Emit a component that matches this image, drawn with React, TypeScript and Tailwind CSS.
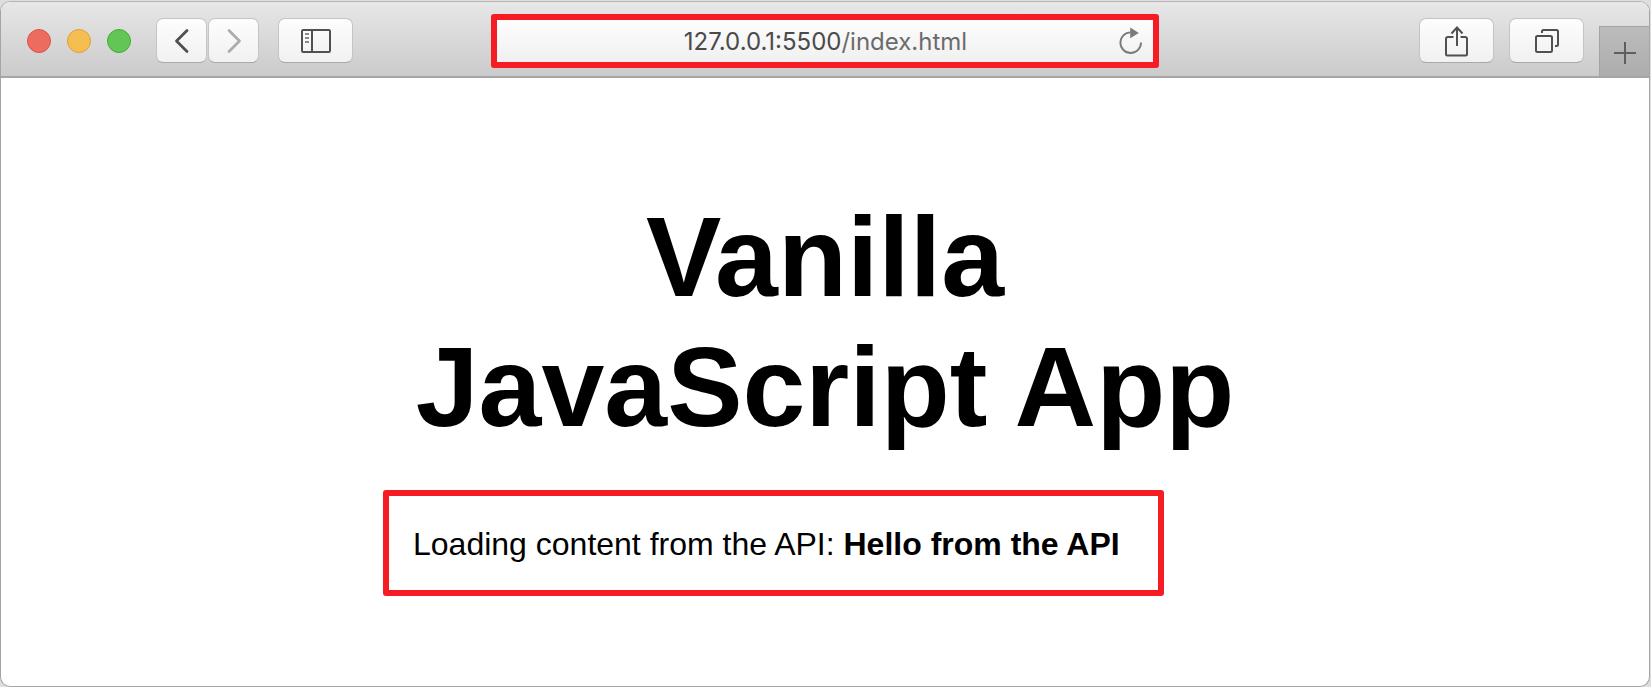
import type { ReactNode } from "react";

function ToolbarButton({ label, className, children }: { label: string; className: string; children: ReactNode }) {
  return (
    <button
      type="button"
      aria-label={label}
      className={`flex h-[45px] shrink-0 items-center justify-center rounded-[7px] border border-[#c4c4c4] border-b-[#a9a9a9] bg-linear-to-b from-[#fdfdfd] to-[#f1f1f1] text-[#505050] ${className}`}
    >
      {children}
    </button>
  );
}

function Toolbar() {
  return (
    <header className="flex h-[76px] items-center border-b-2 border-b-[#a6a6a6] bg-linear-to-b from-[#e7e7e7] to-[#cbcbcb] pt-[3px]">
      <div className="flex flex-1 items-center">
        <div className="flex gap-4 pl-[26px]">
          <button type="button" aria-label="Close" className="size-6 rounded-full border border-[#d95549] bg-[#ee6b60]" />
          <button type="button" aria-label="Minimize" className="size-6 rounded-full border border-[#dca03c] bg-[#f6be50]" />
          <button type="button" aria-label="Zoom" className="size-6 rounded-full border border-[#4aa73c] bg-[#62c655]" />
        </div>
        <div className="ml-[25px] flex gap-px">
          <ToolbarButton label="Back" className="w-[51px]">
            <svg width="16" height="26" viewBox="0 0 16 26" fill="none" stroke="currentColor" strokeWidth="2.8" strokeLinecap="round" strokeLinejoin="round">
              <path d="M13 2.5 2.500 13 13 23.5" />
            </svg>
          </ToolbarButton>
          <ToolbarButton label="Forward" className="w-[51px]">
            <svg width="16" height="26" viewBox="0 0 16 26" fill="none" stroke="#acacac" strokeWidth="2.8" strokeLinecap="round" strokeLinejoin="round">
              <path d="M3 2.5 13.5 13 3 23.5" />
            </svg>
          </ToolbarButton>
        </div>
        <ToolbarButton label="Show sidebar" className="ml-[19px] w-[75px]">
          <svg width="30" height="24" viewBox="0 0 30 24" fill="none" stroke="currentColor" strokeWidth="2">
            <rect x="1" y="1" width="28" height="22" rx="1.2" />
            <path d="M11 1v22" />
            <path d="M4 5h4M4 9h4M4 13h4" stroke="#8a8a8a" />
          </svg>
        </ToolbarButton>
      </div>

      <div className="flex h-[54px] w-[668px] min-w-0 items-center rounded-[3px] border-6 border-[#f51c24] bg-linear-to-b from-[#fdfdfd] to-[#f0f0f0]">
        <a
          href="http://127.0.0.1:5500/index.html"
          className="min-w-0 flex-1 truncate pt-0.5 pl-9 text-center font-['Inter',sans-serif] text-2xl text-[#6b6b6b]"
        >
          <span className="text-[#4a4a4a]">127.0.0.1:5500</span>/index.html
        </a>
        <button type="button" aria-label="Reload" className="mr-[9px] shrink-0 text-[#7b7b7b]">
          <svg width="26" height="28" viewBox="0 0 26 28" fill="none">
            <path d="M23 15.6A10.3 10.3 0 1 1 12.7 5.4" stroke="currentColor" strokeWidth="1.9" />
            <path d="M12.2 0.600 20.8 6 12.2 11.2Z" fill="currentColor" />
          </svg>
        </button>
      </div>

      <div className="flex flex-1 items-center justify-end self-stretch">
        <div className="flex gap-[15px]">
          <ToolbarButton label="Share" className="w-[75px]">
            <svg width="24" height="32" viewBox="0 0 24 32" fill="none" stroke="currentColor" strokeWidth="2" strokeLinejoin="round">
              <path d="M8.5 12H3a2 2 0 0 0-2 2v15a1.5 1.5 0 0 0 1.500 1.500h18A1.500 1.500 0 0 0 22 29V14a2 2 0 0 0-2-2h-4.500" />
              <path d="M12 21V3M6.500 8.500 12 2.500l5.500 6" strokeLinejoin="miter" />
            </svg>
          </ToolbarButton>
          <ToolbarButton label="Show all tabs" className="w-[75px]">
            <svg width="24" height="24" viewBox="0 0 24 24" fill="none" stroke="currentColor" strokeWidth="2">
              <rect x="1" y="7" width="16" height="16" rx="1.5" />
              <path d="M7 4V2.500A1.500 1.500 0 0 1 8.500 1H21.500A1.500 1.500 0 0 1 23 2.500V15.500A1.500 1.500 0 0 1 21.500 17H20" />
            </svg>
          </ToolbarButton>
        </div>
        <button
          type="button"
          aria-label="New tab"
          className="ml-[15px] flex h-[50px] w-[50px] shrink-0 items-center justify-center self-end border-t border-l border-[#a3a3a3] bg-linear-to-b from-[#bcbcbc] to-[#adadad] pt-0.5 text-[#5e5e5e]"
        >
          <svg width="22" height="22" viewBox="0 0 22 22" stroke="currentColor" strokeWidth="2">
            <path d="M11 0v22M0 11h22" />
          </svg>
        </button>
      </div>
    </header>
  );
}

export default function App() {
  return (
    <div className="flex min-h-screen flex-col bg-[#dedede] pt-px pr-px font-['Liberation_Sans',Arial,sans-serif] text-black">
      <div className="flex flex-1 flex-col overflow-hidden rounded-[10px] border border-[#a5a5a5] border-t-[#b5b5b5] bg-white">
        <Toolbar />
        <main className="mx-auto w-full max-w-[824px] flex-1 pt-[114px]">
          <h1 className="text-center text-[113px] leading-[130px] font-bold">Vanilla JavaScript App</h1>
          <p className="-ml-[30px] mt-[38px] w-fit rounded-[3px] border-6 border-[#f51c24] pt-[30px] pr-[38px] pb-7 pl-6 text-[32px] leading-9">
            Loading content from the API: <strong>Hello from the API</strong>
          </p>
        </main>
      </div>
    </div>
  );
}
